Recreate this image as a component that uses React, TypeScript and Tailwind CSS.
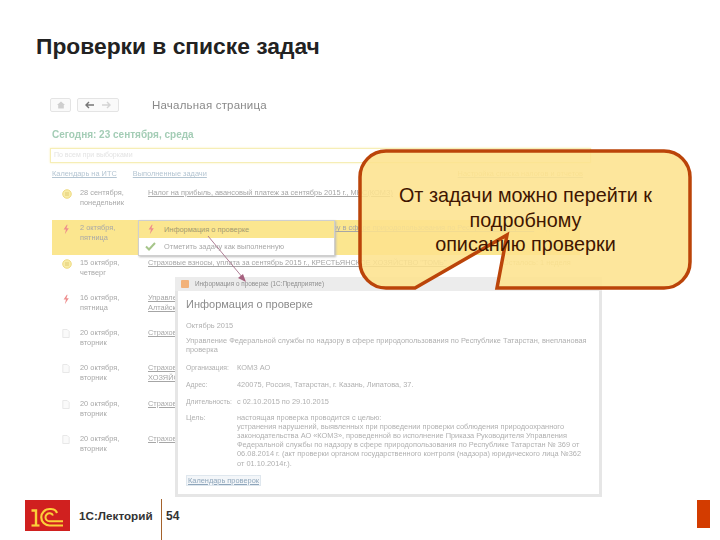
import React from "react";

type Row = { icon: "coin" | "bolt" | "doc"; d1: string; d2: string; link: string[]; extra?: string; active?: boolean };

const rows: Row[] = [
  { icon: "coin", d1: "28 сентября,", d2: "понедельник", link: ["Налог на прибыль, авансовый платеж за сентябрь 2015 г., МНС(КОМЗ)"] },
  { icon: "bolt", d1: "2 октября,", d2: "пятница", link: ["Проверка управления Федеральной службы по надзору в сфере природопользования по Республике Татарстан"], extra: "Осталось неделя", active: true },
  { icon: "coin", d1: "15 октября,", d2: "четверг", link: ["Страховые взносы, уплата за сентябрь 2015 г., КРЕСТЬЯНСКОЕ ХОЗЯЙСТВО \"ТОМЬ\""], extra: "Осталось: 1 неделя" },
  { icon: "bolt", d1: "16 октября,", d2: "пятница", link: ["Управление", "Алтайского"] },
  { icon: "doc", d1: "20 октября,", d2: "вторник", link: ["Страховые взносы"] },
  { icon: "doc", d1: "20 октября,", d2: "вторник", link: ["Страховые взносы", "ХОЗЯЙСТВО"] },
  { icon: "doc", d1: "20 октября,", d2: "вторник", link: ["Страховые взносы"] },
  { icon: "doc", d1: "20 октября,", d2: "вторник", link: ["Страховые взносы"] },
];

function RowIcon({ kind }: { kind: Row["icon"] }) {
  if (kind === "bolt")
    return (
      <svg width="8" height="11" viewBox="0 0 10 13" className="shrink-0">
        <path d="M6 0.5 L2 6.5 L5 6.5 L3.5 12.5 L8.5 5 L5.5 5 L7 0.5 Z" fill="#ee8d8d" />
      </svg>
    );
  if (kind === "doc")
    return (
      <svg width="8" height="9" viewBox="0 0 10 11" className="shrink-0">
        <path d="M1 0.5 H6.5 L9 3 V10.5 H1 Z" fill="#fafafa" stroke="#e0e0e0" strokeWidth="0.9" />
      </svg>
    );
  return (
    <svg width="10" height="10" viewBox="0 0 10 10" className="shrink-0">
      <circle cx="5" cy="5" r="4.3" fill="#f8eca6" stroke="#ecd67a" strokeWidth="0.9" />
      <path d="M3 4 H7 M3 6 H7" stroke="#dcc468" strokeWidth="0.8" />
    </svg>
  );
}

const goal = [
  "настоящая проверка проводится с целью:",
  "устранения нарушений, выявленных при проведении проверки соблюдения природоохранного",
  "законодательства АО «КОМЗ», проведенной во исполнение Приказа Руководителя Управления",
  "Федеральной службы по надзору в сфере природопользования по Республике Татарстан № 369 от",
  "06.08.2014 г. (акт проверки органом государственного контроля (надзора) юридического лица №362",
  "от 01.10.2014г.).",
];

function Field({ label, value, className }: { label: string; value: string; className: string }) {
  return (
    <div className={`flex h-[10px] items-center ${className}`}>
      <span className="w-[51px] shrink-0 whitespace-nowrap text-[6.8px]">{label}</span>
      <span className="whitespace-nowrap">{value}</span>
    </div>
  );
}

function Logo() {
  return (
    <svg width="45" height="31" viewBox="0 0 45 31" fill="none" stroke="#fbd13a" className="block bg-[#d0201f]">
      <path d="M6.5 10.5 H11 V26" strokeWidth="2.4" />
      <path d="M6.5 25.5 H14.5" strokeWidth="2.2" />
      <path d="M38 25.5 H24.5 A8.2 8.2 0 1 1 24.5 9 H26 A6.5 6.5 0 0 1 32 13" strokeWidth="2.2" />
      <path d="M38 21.3 H24.5 A4 4 0 1 1 24.5 13.3 H25 A3.5 3.5 0 0 1 28 15.5" strokeWidth="2" />
    </svg>
  );
}

export default function App() {
  return (
    <div className="relative flex h-[540px] w-[720px] flex-col overflow-hidden bg-white font-['Liberation_Sans',Arial,sans-serif]">
      <h1 className="ml-[36px] mt-[34px] text-[22.8px] font-bold leading-[24px] text-[#222222]">Проверки в списке задач</h1>

      {/* Screenshot of the start page */}
      <div className="ml-[50px] mt-[37px] w-[550px] blur-[0.35px]">
        <div className="flex h-[19px] items-center">
          <div className="flex h-[14px] w-[21px] items-center justify-center rounded-[2px] border border-[#e4e4e4] bg-[#fafafa]">
            <svg width="8" height="8" viewBox="0 0 8 8"><path d="M4 0.5 L8 4 H6.8 V7.5 H1.2 V4 H0 Z" fill="#cfcfcf" /></svg>
          </div>
          <div className="ml-[6px] flex h-[14px] w-[42px] items-center justify-around rounded-[2px] border border-[#e4e4e4] bg-[#fafafa] px-[4px]">
            <svg width="10" height="8" viewBox="0 0 10 8"><path d="M4 1 L1 4 L4 7 M1 4 H9" fill="none" stroke="#777777" strokeWidth="1.4" /></svg>
            <svg width="10" height="8" viewBox="0 0 10 8"><path d="M6 1 L9 4 L6 7 M1 4 H9" fill="none" stroke="#d4d4d4" strokeWidth="1.4" /></svg>
          </div>
          <span className="ml-[33px] text-[11.5px] leading-[14px] tracking-[0.2px] text-[#8a8a8a]">Начальная страница</span>
        </div>

        <div className="ml-[2px] mt-[14px] text-[10px] font-bold leading-[14px] text-[#a4cdb6]">Сегодня: 23 сентября, среда</div>

        <div className="mt-[6px] flex h-[15px] w-[541px] items-center border border-[#f6eeb6] bg-white px-[3px] text-[7px] text-[#e3e3e3] shadow-[0_0_2px_#f8f0b8]">По всем при выборками</div>

        <div className="ml-[2px] mt-[5px] flex h-[12px] w-[531px] items-center text-[7.4px] text-[#b4c5d2] underline">
          <span>Календарь на ИТС</span>
          <span className="ml-[16px]">Выполненные задачи</span>
          <span className="ml-auto text-[#d9cfa4]">Настройка списка налогов и отчетов</span>
        </div>

        <div className="mt-[5px] flex w-[530px] flex-col text-[7.4px] leading-[10px]">
          {rows.map((r) => (
            <div key={r.d1 + r.link[0]} className={`ml-[2px] flex h-[35.1px] items-start pt-[2px] ${r.active ? "bg-[#fbe68f]" : ""}`}>
              <div className="ml-[10px] w-[18px] pt-[2px]">
                <RowIcon kind={r.icon} />
              </div>
              <div className="w-[68px] pt-[1px] text-[#a8a8a8]">
                <div className="whitespace-nowrap">{r.d1}</div>
                <div className="whitespace-nowrap">{r.d2}</div>
              </div>
              <div className="w-[340px] pt-[1px] text-[#a6a6a6] underline">
                {r.link.map((l) => (
                  <div key={l} className="whitespace-nowrap">{l}</div>
                ))}
              </div>
              {r.extra && <span className="pl-[15px] pt-[1px] whitespace-nowrap text-[#c8c29e]">{r.extra}</span>}
            </div>
          ))}
        </div>
      </div>

      {/* Footer */}
      <footer className="mt-auto flex h-[41px] items-start">
        <div className="ml-[25px] mt-[1px]"><Logo /></div>
        <span className="ml-[9px] mt-[10px] w-[75px] whitespace-nowrap text-[11.7px] font-bold leading-[14px] text-[#333333]">1С:Лекторий</span>
        <div className="ml-[7px] h-[41px] w-[1px] bg-[#a5622b]" />
        <span className="ml-[4px] mt-[10px] text-[12px] font-bold leading-[14px] text-[#333333]">54</span>
        <div className="ml-auto mr-[10px] mt-[1px] h-[28px] w-[13px] bg-[#d33c00]" />
      </footer>

      {/* Context menu */}
      <div className="absolute left-[138px] top-[220px] w-[197px] border border-[#cfcfcf] bg-white text-[7.4px] text-[#a8a8a8] shadow-[1px_1px_2px_#bbbbbb] blur-[0.35px]">
        <div className="flex h-[17px] items-center bg-[#fbe68f] pl-[8px]">
          <RowIcon kind="bolt" />
          <span className="ml-[9px] text-[#a39a70]">Информация о проверке</span>
        </div>
        <div className="flex h-[17px] items-center pl-[6px]">
          <svg width="11" height="9" viewBox="0 0 11 9" className="shrink-0"><path d="M1 4.5 L4 7.5 L10 1" fill="none" stroke="#a6c58a" strokeWidth="2" /></svg>
          <span className="ml-[8px]">Отметить задачу как выполненную</span>
        </div>
      </div>

      {/* Information window */}
      <div className="absolute left-[175px] top-[277px] flex h-[220px] w-[427px] flex-col border-[3px] border-t-0 border-[#e6e6e6] bg-white text-[7.4px] leading-[9.2px] text-[#b0b0b0] blur-[0.3px]">
        <div className="-mx-[3px] flex h-[14px] shrink-0 items-center bg-[#ececec] pl-[6px] text-[6.4px] text-[#8f8f8f]">
          <div className="h-[8px] w-[8px] rounded-[1px] bg-[#f2b27a]" />
          <span className="ml-[6px]">Информация о проверке (1С:Предприятие)</span>
        </div>
        <div className="flex flex-col pl-[8px]">
          <div className="mt-[6px] text-[11px] leading-[14px] text-[#8c8c8c]">Информация о проверке</div>
          <div className="mt-[10px]">Октябрь 2015</div>
          <div className="mt-[6px] w-[410px]">Управление Федеральной службы по надзору в сфере природопользования по Республике Татарстан, внеплановая проверка</div>
          <Field className="mt-[8px]" label="Организация:" value="КОМЗ АО" />
          <Field className="mt-[7px]" label="Адрес:" value="420075, Россия, Татарстан, г. Казань, Липатова, 37." />
          <Field className="mt-[7px]" label="Длительность:" value="с 02.10.2015 по 29.10.2015" />
          <div className="mt-[6px] flex">
            <span className="w-[51px] shrink-0">Цель:</span>
            <div className="whitespace-nowrap">
              {goal.map((g) => (
                <div key={g}>{g}</div>
              ))}
            </div>
          </div>
          <div className="mt-[7px] w-fit border border-[#dfe7ee] bg-[#f3f6f9] px-[1px] text-[#8fa6bb] underline">Календарь проверок</div>
        </div>
      </div>

      {/* Arrow from the menu to the window */}
      <svg className="absolute left-[200px] top-[230px]" width="50" height="55" viewBox="0 0 50 55">
        <path d="M8 6 L43 48" stroke="#a6718a" strokeWidth="0.9" />
        <path d="M46 52 L38 48 L43 44 Z" fill="#a6617f" />
      </svg>

      {/* Callout */}
      <div className="absolute left-[358px] top-[149px] h-[141px] w-[335px]">
        <svg className="absolute inset-0" width="335" height="141" viewBox="0 0 335 141">
          <path
            d="M28 2 H306 A26 26 0 0 1 332 28 V113 A26 26 0 0 1 306 139 H139 L149 86 L57 139 H28 A26 26 0 0 1 2 113 V28 A26 26 0 0 1 28 2 Z"
            fill="#fde28e"
            fillOpacity="0.88"
            stroke="#bb4409"
            strokeWidth="3.5"
            strokeLinejoin="miter"
          />
        </svg>
        <div className="relative pl-[-1px] pt-[34px] text-center text-[19.8px] leading-[24.5px] text-[#3f1500]">
          <div>От задачи можно перейти к</div>
          <div>подробному</div>
          <div>описанию проверки</div>
        </div>
      </div>
    </div>
  );
}
